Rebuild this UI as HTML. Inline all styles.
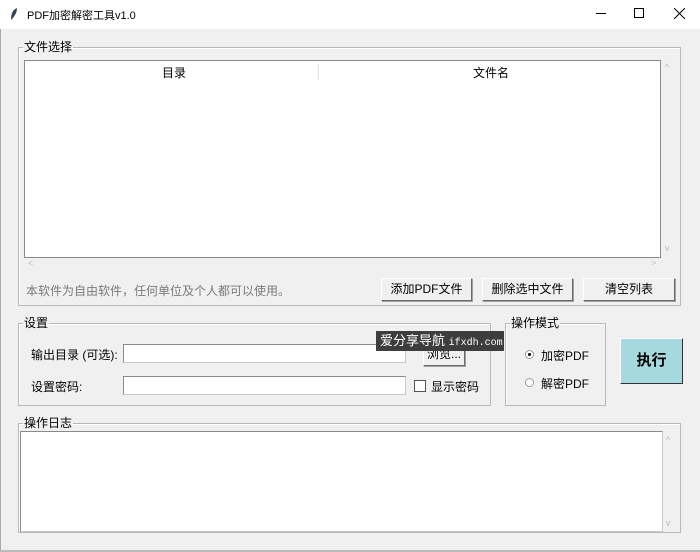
<!DOCTYPE html><html><head><meta charset="utf-8"><style>
*{box-sizing:border-box;margin:0;padding:0}
body{width:700px;height:552px;background:#f0f0f0;font-family:"Liberation Sans","Noto Sans CJK SC",sans-serif;font-size:12px;color:#000;position:relative;overflow:hidden}
.a{position:absolute}
.fr{position:absolute;border:1px solid #b8b8b8;box-shadow:inset 1px 1px 0 #fff}
.lg{position:absolute;background:#f0f0f0;padding:0 1px;font-size:12px;line-height:14px}
.btn{position:absolute;background:#f0f0f0;border:1px solid;border-color:#fff #6a6a6a #6a6a6a #fff;box-shadow:1px 1px 0 #a0a0a0;text-align:center;font-size:12px}
.in{position:absolute;background:#fff;border:1px solid #c8c8c8;border-top-color:#8a8a8a;border-left-color:#8a8a8a}
.rd{position:absolute;width:9px;height:9px;border-radius:50%;border:1px solid #999;background:#fff}
</style></head><body>
<div class="a" style="left:0;top:0;width:700px;height:29px;background:#fff"></div>
<svg class="a" style="left:9px;top:7px" width="10" height="14"><path d="M8 1 C3 3 2 8 2 13 C5 10 8 6 8 1Z" fill="#345"/></svg>
<div class="a" style="left:27px;top:7px;font-size:11px">PDF加密解密工具v1.0</div>
<div class="a" style="left:596px;top:13px;width:10px;height:1px;background:#000"></div>
<div class="a" style="left:634px;top:8px;width:10px;height:10px;border:1px solid #000"></div>
<svg class="a" style="left:674px;top:8px" width="11" height="11"><path d="M0 0L11 11M11 0L0 11" stroke="#000"/></svg>
<div class="a" style="left:0;top:29px;width:1px;height:523px;background:#aaa"></div>
<div class="a" style="left:0;top:550px;width:700px;height:2px;background:#bbb"></div>

<div class="fr" style="left:18px;top:47px;width:663px;height:259px"></div>
<div class="lg" style="left:23px;top:40px">文件选择</div>
<div class="in" style="left:24px;top:60px;width:637px;height:198px;border-color:#8a8a8a"></div>
<div class="a" style="left:162px;top:64px">目录</div>
<div class="a" style="left:318px;top:64px;width:1px;height:16px;background:#e4e4e4"></div>
<div class="a" style="left:473px;top:64px">文件名</div>
<div class="a" style="left:665px;top:62px;color:#bbb;font-size:9px">^</div>
<div class="a" style="left:665px;top:243px;color:#bbb;font-size:9px">v</div>
<div class="a" style="left:28px;top:258px;color:#bbb;font-size:9px">&lt;</div>
<div class="a" style="left:651px;top:258px;color:#bbb;font-size:9px">&gt;</div>
<div class="a" style="left:26px;top:282px;color:#7a7a7a">本软件为自由软件，任何单位及个人都可以使用。</div>
<div class="btn" style="left:381px;top:278px;width:91px;height:23px;line-height:21px">添加PDF文件</div>
<div class="btn" style="left:482px;top:278px;width:91px;height:23px;line-height:21px">删除选中文件</div>
<div class="btn" style="left:583px;top:278px;width:92px;height:23px;line-height:21px">清空列表</div>

<div class="fr" style="left:18px;top:323px;width:473px;height:83px"></div>
<div class="lg" style="left:23px;top:316px">设置</div>
<div class="a" style="left:31px;top:346px">输出目录 (可选):</div>
<div class="in" style="left:123px;top:344px;width:283px;height:19px"></div>
<div class="btn" style="left:423px;top:343px;width:42px;height:23px;line-height:21px">浏览...</div>
<div class="a" style="left:31px;top:378px">设置密码:</div>
<div class="in" style="left:123px;top:376px;width:283px;height:19px"></div>
<div class="a" style="left:414px;top:380px;width:12px;height:12px;border:1px solid #555;background:#fff"></div>
<div class="a" style="left:431px;top:378px">显示密码</div>

<div class="fr" style="left:505px;top:323px;width:101px;height:83px"></div>
<div class="lg" style="left:510px;top:316px">操作模式</div>
<div class="rd" style="left:525px;top:350px"><div class="a" style="left:2px;top:2px;width:3px;height:3px;border-radius:50%;background:#000"></div></div>
<div class="a" style="left:541px;top:347px">加密PDF</div>
<div class="rd" style="left:525px;top:378px"></div>
<div class="a" style="left:541px;top:375px">解密PDF</div>

<div class="a" style="left:620px;top:338px;width:63px;height:46px;background:#a6d8e0;border:1px solid;border-color:#fff #333 #333 #fff;text-align:center;line-height:44px;font-size:15px;font-weight:bold">执行</div>

<div class="fr" style="left:18px;top:423px;width:663px;height:110px"></div>
<div class="lg" style="left:23px;top:416px">操作日志</div>
<div class="in" style="left:20px;top:431px;width:643px;height:101px"></div>
<div class="a" style="left:666px;top:435px;color:#bbb;font-size:9px">^</div>
<div class="a" style="left:666px;top:518px;color:#bbb;font-size:9px">v</div>

<div class="a" style="left:376px;top:331px;width:128px;height:20px;background:#3d3d3d;color:#fff;font-size:13px;line-height:20px;padding-left:4px;white-space:nowrap;overflow:hidden">爱分享导航 <span style="font-family:'Liberation Mono',monospace;font-size:10px">ifxdh.com</span></div>
</body></html>
